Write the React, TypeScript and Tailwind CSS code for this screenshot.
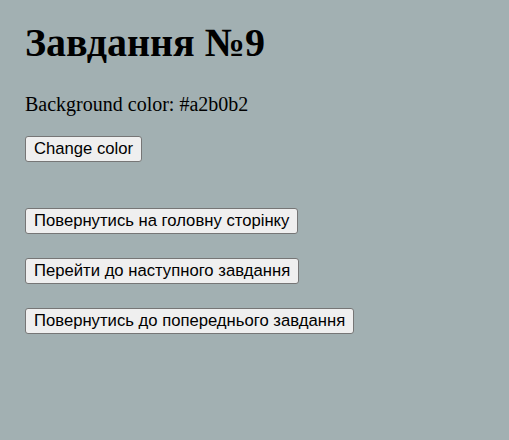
export default function App() {
  const btn =
    "self-start bg-[#efefef] border border-[#767676] rounded-[3px] px-[8px] py-[3px] text-[16.67px] leading-[18px] text-black [font-family:'Liberation_Sans',Arial,sans-serif]";
  return (
    <div className="min-h-[440px] w-full bg-[#a2b0b2] pl-[25px] pt-[20px] flex flex-col [font-family:'Liberation_Serif','Times_New_Roman',serif] text-black">
      <h1 className="text-[40px] leading-[46px] font-bold m-0">Завдання №9</h1>
      <p className="text-[20px] leading-[23px] mt-[27px]">Background color: #a2b0b2</p>
      <button className={btn + " mt-[20px]"}>Change color</button>
      <button className={btn + " mt-[46px]"}>Повернутись на головну сторінку</button>
      <button className={btn + " mt-[24px]"}>Перейти до наступного завдання</button>
      <button className={btn + " mt-[24px]"}>Повернутись до попереднього завдання</button>
    </div>
  );
}
